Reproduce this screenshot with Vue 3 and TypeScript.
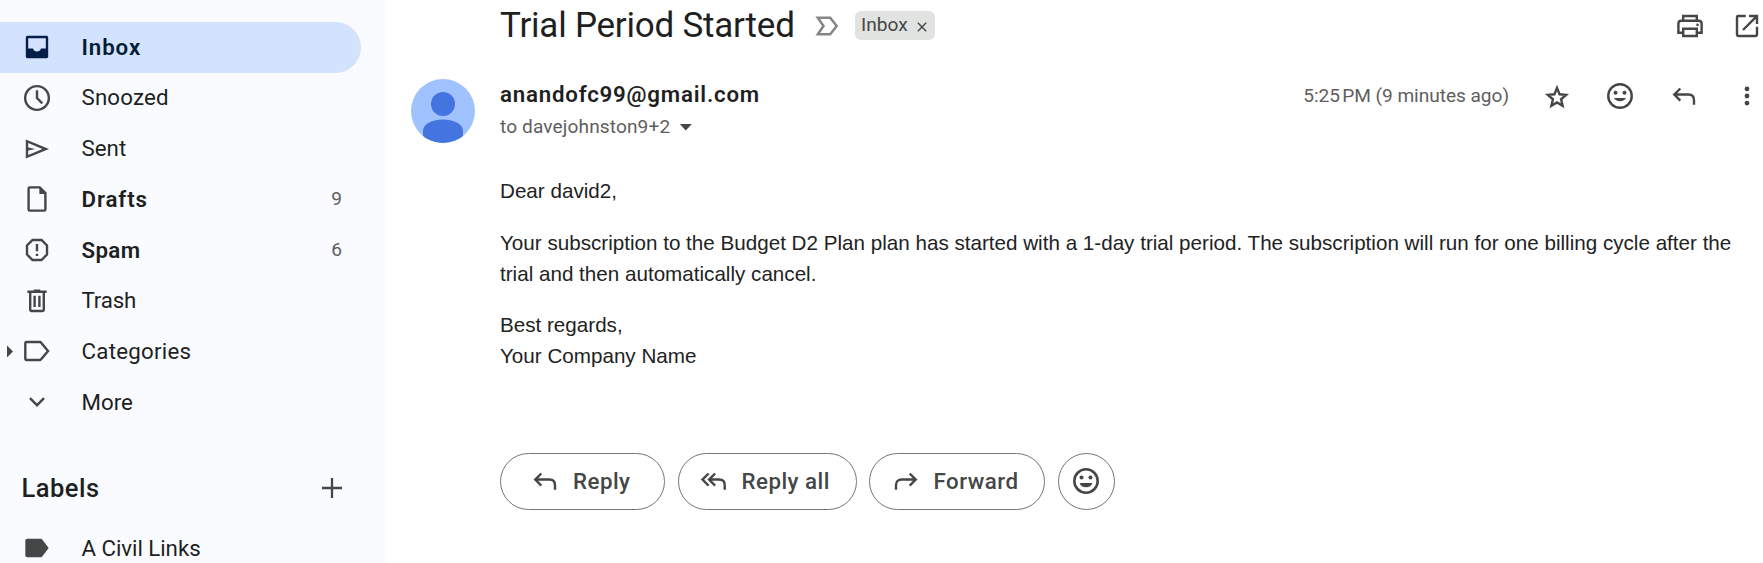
<script setup lang="ts">
interface Folder {
  name: string
  label: string
  count?: number
  active?: boolean
  expandable?: boolean
}

const folders: Folder[] = [
  { name: 'inbox', label: 'Inbox', active: true },
  { name: 'snoozed', label: 'Snoozed' },
  { name: 'sent', label: 'Sent' },
  { name: 'drafts', label: 'Drafts', count: 9 },
  { name: 'spam', label: 'Spam', count: 6 },
  { name: 'trash', label: 'Trash' },
  { name: 'categories', label: 'Categories', expandable: true },
  { name: 'more', label: 'More' },
]

const fills: Record<string, string> = {
  inbox: 'M4 3h12a1 1 0 0 1 1 1v12a1 1 0 0 1-1 1H4a1 1 0 0 1-1-1V4a1 1 0 0 1 1-1zM4.5 4.5v6.5h3a2.6 2.6 0 0 0 5 0h3V4.5z',
  sent: 'M3 16V4l14.5 6L3 16zm1.5-2.25L13.4 10 4.5 6.25V9l4.5 1-4.5 1z',
  drafts: 'M11.5 2.2V6.8H16z',
}

const strokes: Record<string, string> = {
  snoozed: 'M10 2.6a7.4 7.4 0 1 0 0 14.8a7.4 7.4 0 1 0 0-14.8M10 5.2V10l3.300 3.300',
  drafts: 'M5.5 2.75H11.700l3.550 3.550V16.500a.75.75 0 0 1-.75.75h-9a.75.75 0 0 1-.75-.75v-13a.75.75 0 0 1 .75-.75z',
  spam: 'M7.2 3.75h5.6l3.45 3.45v5.6l-3.45 3.45H7.2L3.75 12.8V7.2zM10 6.2v4.6M10 12.3v1.5',
  trash: 'M4 4.25h12M8 3.5h4M5.75 4.5v11a.75.75 0 0 0 .75.75h7a.75.75 0 0 0 .75-.75v-11M8.5 6.7v7M11.5 6.7v7',
  categories: 'M3.4 4.4h8.5q.4 0 .7.4L16.9 10l-4.3 5.2q-.3.4-.7.4H3.4q-.7 0-.7-.7V5.1q0-.7.7-.7z',
  more: 'M5.6 7.6 10 12l4.4-4.4',
}

const actions = [
  { label: 'Reply', cls: 'reply', path: 'M7.7 5.3 3.9 9.1l3.8 3.8M3.9 9.1h8.8q3.550 0 3.550 3.550v2.750' },
  { label: 'Reply all', cls: 'reply-all', path: 'M6.6 5.3 2.8 9.1l3.8 3.8M10.700 5.300 6.900 9.100l3.800 3.800M6.900 9.100h6.300q3.500 0 3.500 3.500v2.800' },
  { label: 'Forward', cls: 'forward', path: 'M12.300 5.300l3.800 3.800-3.800 3.800M16.100 9.100H7.300q-3.550 0-3.550 3.550v2.750' },
]
</script>

<template>
  <div class="app">
    <aside class="sidebar">
      <nav>
        <div v-for="f in folders" :key="f.name" class="row" :class="{ active: f.active, unread: f.count }">
          <span class="arrow" :class="{ shown: f.expandable }"></span>
          <svg class="icon" viewBox="0 0 20 20">
            <path v-if="fills[f.name]" :d="fills[f.name]" fill="currentColor" fill-rule="evenodd" />
            <path v-if="strokes[f.name]" :d="strokes[f.name]" fill="none" stroke="currentColor" stroke-width="1.5" />
          </svg>
          <span class="label" :class="f.name">{{ f.label }}</span>
          <span v-if="f.count" class="count">{{ f.count }}</span>
        </div>
      </nav>
      <div class="labels-head">
        <span>Labels</span>
        <svg viewBox="0 0 20 20" class="plus"><path d="M10 0v20M0 10h20" stroke="currentColor" stroke-width="2.3" /></svg>
      </div>
      <div class="row">
        <span class="arrow"></span>
        <svg class="icon" viewBox="0 0 20 20">
          <path d="M4 4.2h8.300q.7 0 1.100.6L17.300 10l-3.900 5.200q-.4.6-1.100.6H4q-1.300 0-1.300-1.300v-9Q2.700 4.200 4 4.200z" fill="currentColor" />
        </svg>
        <span class="label civil">A Civil Links</span>
      </div>
    </aside>

    <main class="main">
      <header class="subject">
        <h1>Trial Period Started</h1>
        <svg class="marker" viewBox="0 0 24 20"><path d="M2.800 1.700h12.400L21.700 10l-6.500 8.300H2.800L8.500 10z" fill="none" stroke="#858585" stroke-width="2.5" /></svg>
        <span class="chip">
          <span class="chip-text">Inbox</span>
          <svg viewBox="0 0 10 10"><path d="M.8.8l8.400 8.400M9.200.8.8 9.200" stroke="currentColor" stroke-width="1.4" /></svg>
        </span>
        <div class="tools">
          <svg viewBox="0 0 20 20">
            <g fill="none" stroke="currentColor" stroke-width="1.5">
              <path d="M5.750 6.500V3.750h8.500V6.500M5.500 14.250H2.750V8.500q0-1.750 1.750-1.750h11q1.750 0 1.750 1.750v5.750H14.500" />
              <path d="M5.750 11.750h8.500v4.500h-8.500z" />
            </g>
            <circle cx="14.7" cy="9.3" r=".8" fill="currentColor" />
          </svg>
          <svg viewBox="0 0 20 20">
            <path d="M9.200 3.750H4.500a.75.75 0 0 0-.75.75v11c0 .4.35.75.75.75h11a.75.75 0 0 0 .75-.75V10.500M11.300 3.750h4.950v4.950M16 4l-8.500 8.500" fill="none" stroke="currentColor" stroke-width="1.5" />
          </svg>
        </div>
      </header>

      <section class="message">
        <svg class="avatar" viewBox="0 0 64 64">
          <defs><clipPath id="avatar-clip"><circle cx="32" cy="32" r="32" /></clipPath></defs>
          <g clip-path="url(#avatar-clip)">
            <rect width="64" height="64" fill="#a0c3ff" />
            <circle cx="32" cy="25" r="12" fill="#4374e0" />
            <path d="M12 64V52c0-7.500 10-11.500 20-11.500s20 4 20 11.500v12z" fill="#4374e0" />
          </g>
        </svg>
        <div class="content">
          <div class="meta">
            <div class="people">
              <div class="sender">anandofc99@gmail.com</div>
              <div class="recipient"><span>to davejohnston9+2</span><i class="caret"></i></div>
            </div>
            <div class="tools">
              <span class="date">5:25&#8239;PM (9 minutes ago)</span>
              <svg class="star" viewBox="0 0 20 20">
                <path d="M10 4.300l1.600 4 4.100.35-3.150 2.750.95 4.100L10 13.350 6.500 15.500l.95-4.100L4.300 8.650l4.100-.35z" fill="none" stroke="currentColor" stroke-width="1.5" />
              </svg>
              <svg viewBox="0 0 20 20">
                <circle cx="10" cy="10" r="7.35" fill="none" stroke="currentColor" stroke-width="1.5" />
                <circle cx="7.2" cy="7.9" r="1.25" fill="currentColor" /><circle cx="12.8" cy="7.9" r="1.25" fill="currentColor" />
                <path d="M6.200 11.300h7.600a4.100 3.100 0 0 1-7.600 0z" fill="currentColor" />
              </svg>
              <svg viewBox="0 0 20 20"><path :d="actions[0].path" fill="none" stroke="currentColor" stroke-width="1.5" /></svg>
              <svg viewBox="0 0 20 20"><circle cx="10" cy="5.6" r="1.5" fill="currentColor" /><circle cx="10" cy="10" r="1.5" fill="currentColor" /><circle cx="10" cy="14.4" r="1.5" fill="currentColor" /></svg>
            </div>
          </div>
          <div class="body">
            <p>Dear david2,</p>
            <p>Your subscription to the Budget D2 Plan plan has started with a 1-day trial period. The subscription will run for one billing cycle after the<br>trial and then automatically cancel.</p>
            <p>Best regards,<br>Your Company Name</p>
          </div>
          <div class="actions">
            <button v-for="a in actions" :key="a.label" :class="a.cls">
              <svg viewBox="0 0 20 20"><path :d="a.path" fill="none" stroke="currentColor" stroke-width="1.5" /></svg>
              <span>{{ a.label }}</span>
            </button>
            <button class="emoji">
              <svg viewBox="0 0 20 20">
                <circle cx="10" cy="10" r="7.3" fill="none" stroke="currentColor" stroke-width="1.6" />
                <circle cx="7.2" cy="7.8" r="1.25" fill="currentColor" /><circle cx="12.8" cy="7.8" r="1.25" fill="currentColor" />
                <path d="M6 11.200h8a4.200 3.900 0 0 1-8 0z" fill="currentColor" />
              </svg>
            </button>
          </div>
        </div>
      </section>
    </main>
  </div>
</template>

<style>
body { margin: 0; background: #fff; }
</style>

<style scoped>
.app {
  display: flex;
  width: 100%;
  height: 563px;
  overflow: hidden;
  font-family: Roboto, "Liberation Sans", sans-serif;
  color: #1f1f1f;
}
svg { flex: none; display: block; }
.sidebar {
  flex: none;
  box-sizing: border-box;
  width: 386px;
  padding-top: 22px;
  background: #f9fbff;
}
.row {
  display: flex;
  align-items: center;
  box-sizing: border-box;
  width: 361px;
  height: 50.7px;
  padding: 0 19px 0 7px;
  border-radius: 0 26px 26px 0;
  font-size: 22.3px;
  color: #444746;
}
.row.active { background: #d3e3fd; color: #041e49; }
.arrow { width: 6px; height: 12px; margin-right: 8px; }
.arrow.shown { background: #444746; clip-path: polygon(0 0, 100% 50%, 0 100%); }
.icon { width: 32px; height: 32px; margin-right: 28.5px; }
.label { flex: 1; margin-top: -1px; color: #1f1f1f; white-space: nowrap; }
.active .label { margin-top: 0; color: #001d35; font-weight: 600; letter-spacing: .9px; }
.unread .label { font-weight: 600; letter-spacing: .9px; }
.unread .label.spam { letter-spacing: .35px; }
.snoozed { margin-top: -2px; letter-spacing: .15px; }
.trash { letter-spacing: -.2px; }
.categories { letter-spacing: .25px; }
.civil { margin-top: 0; letter-spacing: -.05px; }
.count { margin-top: -1px; font-size: 19.1px; color: #5e5e5e; }
.labels-head {
  display: flex;
  align-items: center;
  justify-content: space-between;
  height: 50px;
  margin-top: 35px;
  margin-bottom: 10.5px;
  padding: 0 44px 0 21.5px;
  font-size: 25.5px;
  font-weight: 500;
  letter-spacing: .5px;
}
.plus { width: 20px; height: 20px; color: #444746; }
.main { flex: 1; min-width: 0; display: flex; flex-direction: column; color: #1f1f1f; }
.subject { display: flex; align-items: center; height: 51px; padding-left: 114px; }
h1 { margin: 0; width: 315px; font-size: 35px; line-height: 50px; font-weight: 400; letter-spacing: -.22px; white-space: nowrap; }
.marker { width: 24px; height: 20px; margin-right: 16px; }
.chip {
  display: flex;
  align-items: center;
  justify-content: space-between;
  box-sizing: border-box;
  width: 80px;
  height: 29px;
  padding: 0 8px 0 6px;
  border-radius: 6px;
  background: #e1e3e1;
  color: #444746;
  font-size: 19.1px;
}
.chip-text { margin-top: -2px; }
.chip svg { width: 10px; height: 10px; margin-top: 2px; }
.tools { display: flex; align-items: center; gap: 31.5px; margin-left: auto; color: #444746; }
.tools svg { width: 32px; height: 32px; }
.subject .tools { gap: 25px; }
.message { display: flex; padding-left: 25px; }
.avatar { width: 64px; height: 64px; margin-top: 28px; }
.content { flex: 1; min-width: 0; padding-left: 25px; }
.meta { display: flex; align-items: flex-start; height: 124px; }
.people { padding-top: 27px; }
.sender { font-size: 22.3px; font-weight: 600; line-height: 32px; letter-spacing: .78px; }
.recipient { display: flex; align-items: center; line-height: 34px; font-size: 19.1px; letter-spacing: .12px; color: #5e5e5e; }
.caret { margin-left: 9px; width: 13px; height: 7px; background: #444746; clip-path: polygon(0 0, 100% 0, 50% 100%); }
.date { margin-top: -2px; margin-right: 1px; font-size: 19.1px; letter-spacing: -.04px; color: #5e5e5e; white-space: nowrap; }
.meta .tools { margin-top: 28px; }
.star { margin: 2px 0 0 -1px; }
.body {
  font-family: "Liberation Sans", Arial, sans-serif;
  font-size: 20.64px;
  line-height: 31px;
  color: #222;
  white-space: nowrap;
}
p { margin: 0 0 20.64px; }
.actions { display: flex; margin-top: 81.7px; }
button {
  display: flex;
  align-items: center;
  box-sizing: border-box;
  height: 57px;
  margin: 0 12.5px 0 0;
  padding: 0 0 0 28px;
  border: 1px solid #747775;
  border-radius: 29px;
  background: #fff;
  color: #444746;
  font: 500 22.3px Roboto, "Liberation Sans", sans-serif;
  letter-spacing: .48px;
  white-space: nowrap;
}
button svg { width: 32px; height: 32px; margin-right: 12px; }
.reply { width: 165px; }
.reply-all { width: 179px; padding-left: 19px; }
.forward { width: 176px; padding-left: 19.5px; }
.emoji { width: 57px; padding: 0; justify-content: center; }
.emoji svg { margin: 0; }
</style>
